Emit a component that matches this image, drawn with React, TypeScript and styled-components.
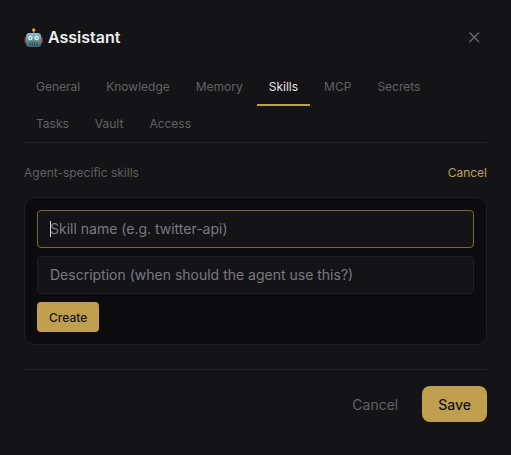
import React from "react";
import styled, { createGlobalStyle } from "styled-components";

const Global = createGlobalStyle`
  html, body { margin: 0; padding: 0; background: #141416; }
  body { font-family: Inter, "Noto Sans", sans-serif; }
  * { box-sizing: border-box; }
`;
const Modal = styled.div`
  width: 511px; height: 455px; padding: 24px; background: #141416; overflow: hidden;
  display: flex; flex-direction: column;
`;
const Header = styled.div`
  display: flex; align-items: center; justify-content: space-between; height: 27px; margin-bottom: 18px;
`;
const Title = styled.h2`
  margin: 0; display: flex; align-items: center; gap: 5px;
  font-size: 16px; font-weight: 600; color: #eeeeef; line-height: 27px;
`;
const CloseButton = styled.button`
  width: 28px; height: 28px; margin: -1px -1px 0 0; padding: 0; border: 0; background: none; color: #6b6b70;
  display: flex; align-items: center; justify-content: center;
`;
const Tabs = styled.div`
  display: flex; flex-wrap: wrap; align-content: flex-start; column-gap: 2px; height: 74px;
  border-bottom: 1px solid #232326;
`;
const Tab = styled.button<{ $active?: boolean }>`
  height: 37px; padding: 0 12px; border: 0; background: none; font: 400 12px/1 Inter, sans-serif;
  color: ${p => (p.$active ? "#e4e4e6" : "#616165")};
  border-bottom: 2px solid ${p => (p.$active ? "#c0a04f" : "transparent")};
`;
const SectionHead = styled.div`
  display: flex; justify-content: space-between; align-items: center; margin-top: 21px; height: 16px;
`;
const SectionLabel = styled.span`
  font-size: 12px; color: #5f5f63;
`;
const LinkButton = styled.button`
  border: 0; padding: 0; background: none; font: 400 12px Inter, sans-serif; color: #c0a04f;
`;
const Panel = styled.div`
  margin-top: 17px; padding: 12px; background: #0c0c0e; border: 1px solid #1f1f23; border-radius: 10px;
  display: flex; flex-direction: column; gap: 8px;
`;
const FieldWrap = styled.div`
  position: relative;
`;
const Caret = styled.span`
  position: absolute; left: 13px; top: 11px; width: 1px; height: 16px; background: #d8d8dc;
`;
const Field = styled.input<{ $focus?: boolean }>`
  display: block; width: 100%; height: 38px; padding: 0 12px 2px; background: #141416; border-radius: 4px; outline: none;
  border: 1px solid ${p => (p.$focus ? "#7a6836" : "#1f1f23")};
  font: 400 14px Inter, sans-serif; color: #e4e4e6;
  &::placeholder { color: #797982; opacity: 1; }
`;
const CreateButton = styled.button`
  align-self: flex-start; height: 30px; padding: 0 12px; border: 0; border-radius: 4px; background: #c0a04f;
  font: 500 12px Inter, sans-serif; color: #141416;
`;
const Footer = styled.div`
  margin-top: 24px; padding-top: 16px; border-top: 1px solid #232326;
  display: flex; justify-content: flex-end; align-items: center; gap: 24px;
`;
const GhostButton = styled.button`
  border: 0; padding: 0; background: none; font: 400 14px Inter, sans-serif; color: #616165;
`;
const SaveButton = styled.button`
  height: 36px; padding: 0 16px; border: 0; border-radius: 8px; background: #c0a04f;
  font: 500 14px Inter, sans-serif; color: #141416;
`;

function RobotIcon() {
  return (
    <svg width="19" height="20" viewBox="0 0 19 20" aria-label="robot">
      <defs>
        <linearGradient id="head" x1="0" y1="0" x2="0" y2="1">
          <stop offset="0" stopColor="#8fc0cf" />
          <stop offset="1" stopColor="#356272" />
        </linearGradient>
      </defs>
      <rect x="9" y="2" width="1.4" height="4" fill="#7a6a55" />
      <circle cx="9.7" cy="2" r="1.7" fill="#e8a13a" />
      <rect x="0.6" y="9" width="2.5" height="6" rx="1" fill="#a5403c" />
      <rect x="16.2" y="9" width="2.5" height="6" rx="1" fill="#a5403c" />
      <rect x="2" y="5" width="15.2" height="14" rx="3.5" fill="url(#head)" />
      <circle cx="6.4" cy="10" r="2.2" fill="#dff6fb" />
      <circle cx="12.6" cy="10" r="2.2" fill="#dff6fb" />
      <circle cx="6.4" cy="10" r="1" fill="#4fb6d6" />
      <circle cx="12.6" cy="10" r="1" fill="#4fb6d6" />
      <rect x="8.8" y="11.6" width="1.4" height="1.2" fill="#c9524c" />
      <rect x="5.6" y="14.4" width="7.8" height="2.4" rx="1" fill="#2b3f49" />
      <circle cx="7.2" cy="15.6" r="0.6" fill="#aeb9bd" />
      <circle cx="9.5" cy="15.6" r="0.6" fill="#aeb9bd" />
      <circle cx="11.8" cy="15.6" r="0.6" fill="#aeb9bd" />
    </svg>
  );
}

export default function App() {
  return (
    <Modal>
      <Global />
      <Header>
        <Title><RobotIcon />Assistant</Title>
        <CloseButton aria-label="Close">
          <svg width="16" height="16" viewBox="0 0 16 16" fill="none" stroke="currentColor" strokeWidth="1.4">
            <path d="M3.5 3.5l9.5 9.5M13 3.5L3.5 13" />
          </svg>
        </CloseButton>
      </Header>
      <Tabs>
        <Tab>General</Tab>
        <Tab>Knowledge</Tab>
        <Tab>Memory</Tab>
        <Tab $active>Skills</Tab>
        <Tab>MCP</Tab>
        <Tab>Secrets</Tab>
        <Tab>Tasks</Tab>
        <Tab>Vault</Tab>
        <Tab>Access</Tab>
      </Tabs>
      <SectionHead>
        <SectionLabel>Agent-specific skills</SectionLabel>
        <LinkButton>Cancel</LinkButton>
      </SectionHead>
      <Panel>
        <FieldWrap>
          <Field $focus placeholder="Skill name (e.g. twitter-api)" />
          <Caret />
        </FieldWrap>
        <Field placeholder="Description (when should the agent use this?)" />
        <CreateButton>Create</CreateButton>
      </Panel>
      <Footer>
        <GhostButton>Cancel</GhostButton>
        <SaveButton>Save</SaveButton>
      </Footer>
    </Modal>
  );
}
